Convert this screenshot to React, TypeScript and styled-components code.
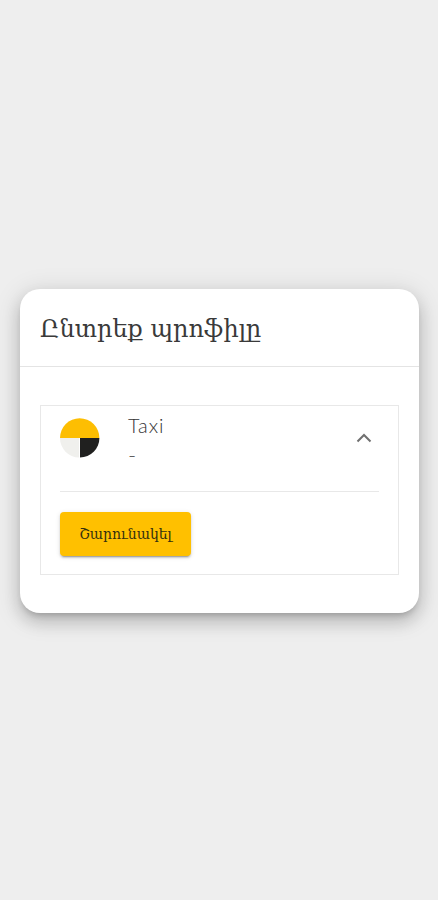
import React from "react";
import styled, { createGlobalStyle } from "styled-components";

const GlobalStyle = createGlobalStyle`
  * { box-sizing: border-box; }
  html, body { margin: 0; background: #eeeeee; }
`;

const Page = styled.main`
  min-height: 900px;
  padding: 289px 19px 0 20px;
  background: #eeeeee;
  font-family: Lato, "DejaVu Sans", sans-serif;
`;

const Card = styled.section`
  height: 324px;
  border-radius: 20px;
  background: #fff;
  box-shadow: 0 5px 6px -3px rgba(0, 0, 0, 0.2),
    0 9px 16px 1px rgba(0, 0, 0, 0.14), 0 4px 24px 4px rgba(0, 0, 0, 0.1);
`;

const CardHeader = styled.header`
  height: 78px;
  padding: 0 20px;
  border-bottom: 1px solid #e4e4e4;
`;

const Title = styled.h1`
  margin: 0;
  font: 400 24px/80px "DejaVu Serif", serif;
  color: #3a3a3a;
  white-space: nowrap;
`;

const CardBody = styled.div`
  padding: 38px 20px;
`;

const Panel = styled.article`
  height: 170px;
  padding: 0 19px;
  border: 1px solid #e8e8e8;
`;

const ProfileRow = styled.div`
  display: flex;
  height: 86px;
  padding-top: 10px;
  border-bottom: 1px solid #e8e8e8;
`;

const Avatar = styled.svg`
  width: 40px;
  height: 40px;
  margin-top: 2px;
`;

const ProfileText = styled.div`
  flex: 1;
  margin-left: 28px;
  font-size: 20px;
  line-height: 18px;
  font-weight: 300;
  letter-spacing: 0.9px;
  color: #333;
`;

const Subtitle = styled.div`
  margin-top: 12px;
  font-size: 22px;
  line-height: 18px;
  color: #555;
`;

const Chevron = styled.svg`
  width: 16px;
  height: 10px;
  margin: 17px 7px 0 0;
`;

const ContinueButton = styled.button`
  display: block;
  width: 131px;
  height: 44px;
  margin-top: 20px;
  padding: 0;
  border: 0;
  border-radius: 4px;
  background: #ffc000;
  color: #34300f;
  font: 400 14px/44px "DejaVu Serif", serif;
  box-shadow: 0 3px 1px -2px rgba(0, 0, 0, 0.2),
    0 2px 2px rgba(0, 0, 0, 0.14), 0 1px 5px rgba(0, 0, 0, 0.12);
`;

export default function App() {
  return (
    <Page>
      <GlobalStyle />
      <Card>
        <CardHeader>
          <Title>Ընտրեք պրոֆիլը</Title>
        </CardHeader>
        <CardBody>
          <Panel>
            <ProfileRow>
              <Avatar viewBox="0 0 40 40" aria-hidden="true">
                <path d="M0 20a19.7 19.7 0 0 1 39.4 0Z" fill="#fdbe02" />
                <path d="M0 20h19v19.6A19.6 19.6 0 0 1 0 20Z" fill="#f0f0ed" />
                <path d="M20 20h19.4A19.4 19.6 0 0 1 20 39.6Z" fill="#20201f" />
              </Avatar>
              <ProfileText>
                Taxi
                <Subtitle>-</Subtitle>
              </ProfileText>
              <Chevron viewBox="0 0 16 10" aria-hidden="true">
                <path d="m1.5 8.5 6.5-6.5 6.5 6.5" fill="none" stroke="#707070" strokeWidth="2" />
              </Chevron>
            </ProfileRow>
            <ContinueButton type="button">Շարունակել</ContinueButton>
          </Panel>
        </CardBody>
      </Card>
    </Page>
  );
}
